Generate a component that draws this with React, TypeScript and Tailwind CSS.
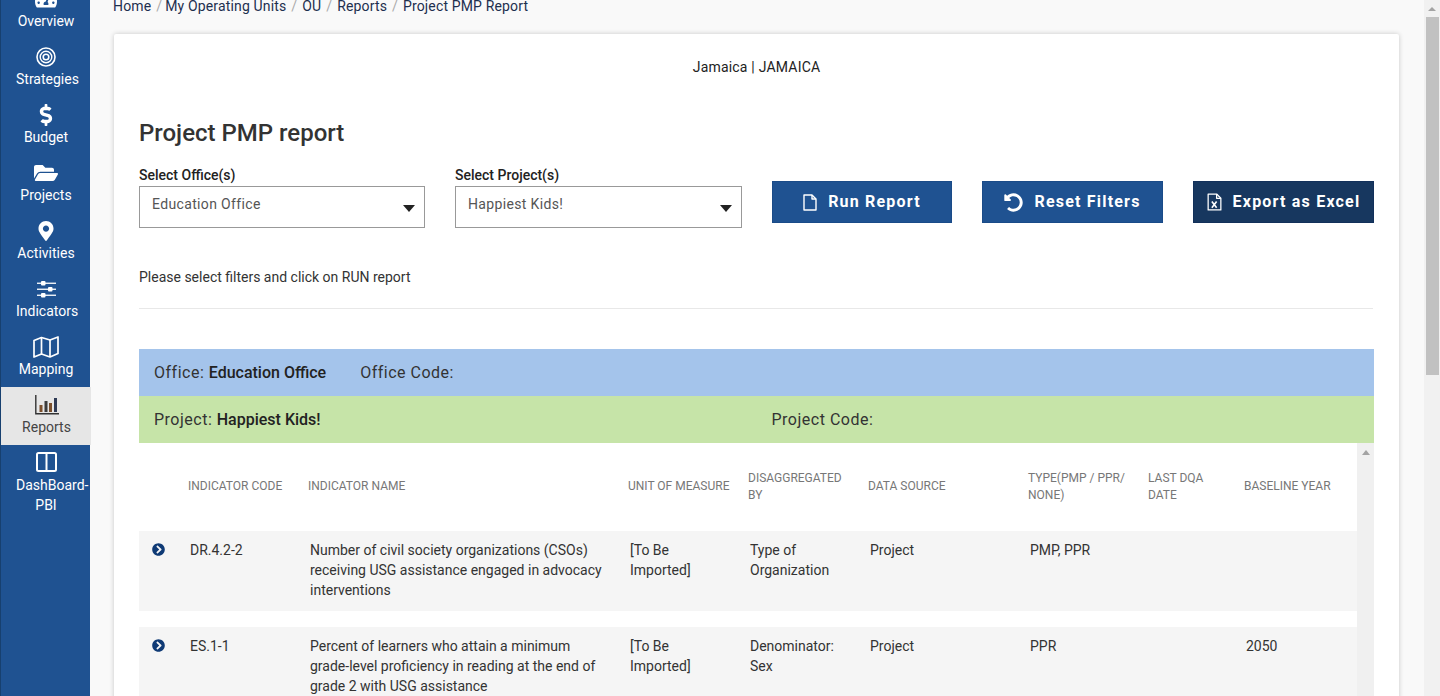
import React from "react";
import { FaDollarSign, FaFolderOpen, FaMapMarkerAlt, FaTachometerAlt, FaChevronCircleRight, FaUndoAlt } from "react-icons/fa";

const Target = () => (
  <svg width="20" height="20" viewBox="0 0 20 20" fill="none" stroke="currentColor">
    <circle cx="10" cy="10" r="9" strokeWidth="1.6" />
    <circle cx="10" cy="10" r="5.8" strokeWidth="1.4" />
    <circle cx="10" cy="10" r="2.8" strokeWidth="1.6" />
  </svg>
);
const Sliders = () => (
  <svg width="19" height="17" viewBox="0 0 19 17" fill="currentColor">
    <rect x="0" y="1.6" width="19" height="1.3" />
    <rect x="0" y="7.6" width="19" height="1.3" />
    <rect x="0" y="13.6" width="19" height="1.3" />
    <rect x="4" y="0" width="4.5" height="4.4" rx="1" />
    <rect x="11" y="6" width="4.5" height="4.4" rx="1" />
    <rect x="4" y="12" width="4.5" height="4.4" rx="1" />
  </svg>
);
const MapIcon = () => (
  <svg width="26" height="22" viewBox="0 0 26 22" fill="none" stroke="currentColor" strokeWidth="1.7" strokeLinejoin="round">
    <path d="M1 4.5 8.5 1.5 17 4 25 1v16.5L17 21 8.5 18 1 21Z" />
    <path d="M8.5 1.5V18M17 4v17" />
  </svg>
);
const Chart = () => (
  <svg width="24" height="20" viewBox="0 0 24 20" fill="none">
    <path d="M.8 0v18.8H24" stroke="#333" strokeWidth="1.4" />
    <rect x="4.5" y="10" width="3" height="7" fill="#7b4f2c" />
    <rect x="9.5" y="6" width="3" height="11" fill="#3b3b3b" />
    <rect x="14" y="8" width="3" height="9" fill="#7b4f2c" />
    <rect x="19" y="3" width="3" height="14" fill="#2f3b55" />
  </svg>
);
const Columns = () => (
  <svg width="21" height="20" viewBox="0 0 21 20" fill="none" stroke="currentColor" strokeWidth="2">
    <rect x="1" y="1" width="19" height="18" rx="1.5" />
    <path d="M10.5 1v18" />
  </svg>
);
const FileIcon = () => (
  <svg width="14" height="17" viewBox="0 0 14 17" fill="none" stroke="currentColor" strokeWidth="1.4" strokeLinejoin="round">
    <path d="M1 1h8l4 4v11H1Z" />
    <path d="M9 1v4h4" />
  </svg>
);
const ExcelIcon = () => (
  <svg width="15" height="18" viewBox="0 0 14 17" fill="none" stroke="currentColor" strokeWidth="1.2" strokeLinejoin="round">
    <path d="M1 1h8l4 4v11H1Z" />
    <path d="M9 1v4h4" />
    <path d="M4.5 8l4.5 6M9 8l-4.5 6" strokeWidth="1.5" />
  </svg>
);

const nav: { label: React.ReactNode; icon: React.ReactNode; active?: boolean; last?: boolean }[] = [
  { label: "Overview", icon: <FaTachometerAlt size={22} /> },
  { label: "Strategies", icon: <Target /> },
  { label: "Budget", icon: <FaDollarSign size={22} /> },
  { label: "Projects", icon: <FaFolderOpen size={24} /> },
  { label: "Activities", icon: <FaMapMarkerAlt size={20} /> },
  { label: "Indicators", icon: <Sliders /> },
  { label: "Mapping", icon: <MapIcon /> },
  { label: "Reports", icon: <Chart />, active: true },
  { label: <>DashBoard-<br />PBI</>, icon: <Columns />, last: true },
];

const crumbs = ["Home", "My Operating Units", "OU", "Reports", "Project PMP Report"];

const headers = ["Indicator Code", "Indicator Name", "Unit of Measure", "Disaggregated By", "Data Source", "Type(PMP / PPR/ None)", "Last DQA Date", "Baseline Year"];
const wrapped = ["Disaggregated By", "Type(PMP / PPR/ None)", "Last DQA Date"];
const rows = [
  ["DR.4.2-2", "Number of civil society organizations (CSOs) receiving USG assistance engaged in advocacy interventions", "[To Be Imported]", "Type of Organization", "Project", "PMP, PPR", "", ""],
  ["ES.1-1", "Percent of learners who attain a minimum grade-level proficiency in reading at the end of grade 2 with USG assistance", "[To Be Imported]", "Denominator: Sex", "Project", "PPR", "", "2050"],
];
const gridCols = "grid grid-cols-[49px_120px_320px_120px_120px_160px_120px_96px_113px]";

const Select = ({ label, value, w }: { label: string; value: string; w: string }) => (
  <div className={w}>
    <div className="text-[14px] leading-[22px] font-medium text-[#222] -mt-[1px]">{label}</div>
    <div className="h-[42px] border border-[#999] flex justify-between pl-3 pr-[9px] bg-white">
      <span className="text-[14px] leading-[34px] tracking-[0.35px] text-[#555]">{value}</span>
      <span className="mt-[18px] w-0 h-0 border-x-[6.5px] border-x-transparent border-t-[7px] border-t-[#222]" />
    </div>
  </div>
);

const Btn = ({ icon, label, w, dark }: { icon: React.ReactNode; label: string; w: string; dark?: boolean }) => (
  <button className={`${w} h-[42px] flex items-center justify-center gap-[11px] border text-white font-bold text-[16px] tracking-[1.2px] ${dark ? "bg-[#17375f] border-[#12305a]" : "bg-[#1f5291] border-[#1a4b88]"}`}>
    {icon}
    {label}
  </button>
);

export default function App() {
  return (
    <div className="flex h-[696px] w-[1440px] overflow-hidden bg-[#f9f9f9] font-['Roboto',sans-serif] text-[14px]">
      <aside className="w-[90px] shrink-0 bg-[#1f5291] border-l border-[#17406f] text-white">
        <div className="-mt-[19px]">
          {nav.map((n, i) => (
            <div key={i} className={`h-[58px] flex flex-col items-center pl-px pt-[6px] text-center ${n.active ? "bg-[#e6e6e6] text-[#444] -mr-px" : ""}`}>
              <div className={`h-[24px] flex items-center justify-center ${n.last ? "mt-[1px]" : ""}`}>{n.icon}</div>
              <div className={`w-[60px] text-[14px] leading-[20px] whitespace-nowrap ${n.last ? "mt-[3px]" : ""}`}>{n.label}</div>
            </div>
          ))}
        </div>
      </aside>

      <main className="flex-1 min-w-0 pl-[23px] pr-[25px] -mt-[4px]">
        <nav className="h-[38px] flex text-[14px] leading-[20px] tracking-[0.15px] text-[#1d2f4f]">
          {crumbs.map((c, i) => (
            <span key={c} className="flex">
              {i > 0 && <span className={`text-[#aaa] ml-[5px] ${i === 1 ? "mr-[3px]" : "mr-[5px]"}`}>/</span>}
              {c}
            </span>
          ))}
        </nav>
        <section className="ml-px bg-white rounded-[2px] shadow-[0_0_5px_rgba(0,0,0,0.2)] px-[25px] h-[700px]">
          <div className="pt-[23px] text-center text-[14px] leading-[20px] tracking-[0.2px] text-[#222]">Jamaica | JAMAICA</div>
          <h1 className="mt-[40px] text-[24px] leading-[32px] font-medium text-[#333]">Project PMP report</h1>
          <div className="mt-[16px] flex h-[74px]">
            <Select w="w-[286px]" label="Select Office(s)" value="Education Office" />
            <div className="w-[30px]" />
            <Select w="w-[287px]" label="Select Project(s)" value="Happiest Kids!" />
            <div className="w-[30px]" />
            <div className="flex gap-[30px] pt-[16px]">
              <Btn w="w-[180px]" icon={<FileIcon />} label="Run Report" />
              <Btn w="w-[181px]" icon={<FaUndoAlt size={19} />} label="Reset Filters" />
              <Btn w="w-[181px]" dark icon={<ExcelIcon />} label="Export as Excel" />
            </div>
          </div>
          <p className="mt-[28px] text-[14px] leading-[20px] text-[#333]">Please select filters and click on RUN report</p>
          <hr className="mt-[21px] mr-px border-[#e8e8e8]" />
          <div className="mt-[40px] h-[47px] bg-[#a4c4eb] flex items-center pl-[15px] text-[16px] tracking-[0.5px] text-[#333]">
            <span>Office: <b className="font-medium tracking-normal text-[#222]">Education Office</b></span>
            <span className="ml-[34px]">Office Code:</span>
          </div>
          <div className="h-[47px] bg-[#c6e4a8] flex items-center pl-[15px] text-[16px] tracking-[0.5px] text-[#333]">
            <span className="w-[617.5px]">Project: <b className="font-medium tracking-normal text-[#222]">Happiest Kids!</b></span>
            <span>Project Code:</span>
          </div>
          <div className="flex">
            <div className="w-[1218px] shrink-0">
              <div className={`${gridCols} h-[88px] items-center`}>
                <div />
                {headers.map((h) => (
                  <div key={h} className={`text-[12px] leading-[17px] uppercase text-[#777] pr-[12px] ${wrapped.includes(h) ? "" : "mb-[2px]"}`}>{h}</div>
                ))}
              </div>
              {rows.map((r) => (
                <div key={r[0]} className={`${gridCols} h-[80px] mb-[16px] bg-[#f5f5f5] pt-[9px] text-[14px] leading-[20px] text-[#333]`}>
                  <div className="pl-[13px] pt-[3px] text-[#0f3a75]"><FaChevronCircleRight size={13} /></div>
                  {r.map((c, i) => (
                    <div key={i} className="pl-[2px] pr-[18px]">{c}</div>
                  ))}
                </div>
              ))}
            </div>
            <div className="w-[17px] shrink-0 bg-[#f0f0f0] flex justify-center pt-[7px] h-[300px]">
              <span className="w-0 h-0 border-x-[4px] border-x-transparent border-b-[5px] border-b-[#a3a3a3]" />
            </div>
          </div>
        </section>
      </main>

      <div className="w-[16px] shrink-0 bg-[#f1f1f1] flex flex-col items-center">
        <div className="h-[17px] flex items-center">
          <span className="w-0 h-0 border-x-[4px] border-x-transparent border-b-[4px] border-b-[#a3a3a3]" />
        </div>
        <div className="w-[13px] h-[358px] bg-[#c1c1c1]" />
      </div>
    </div>
  );
}
